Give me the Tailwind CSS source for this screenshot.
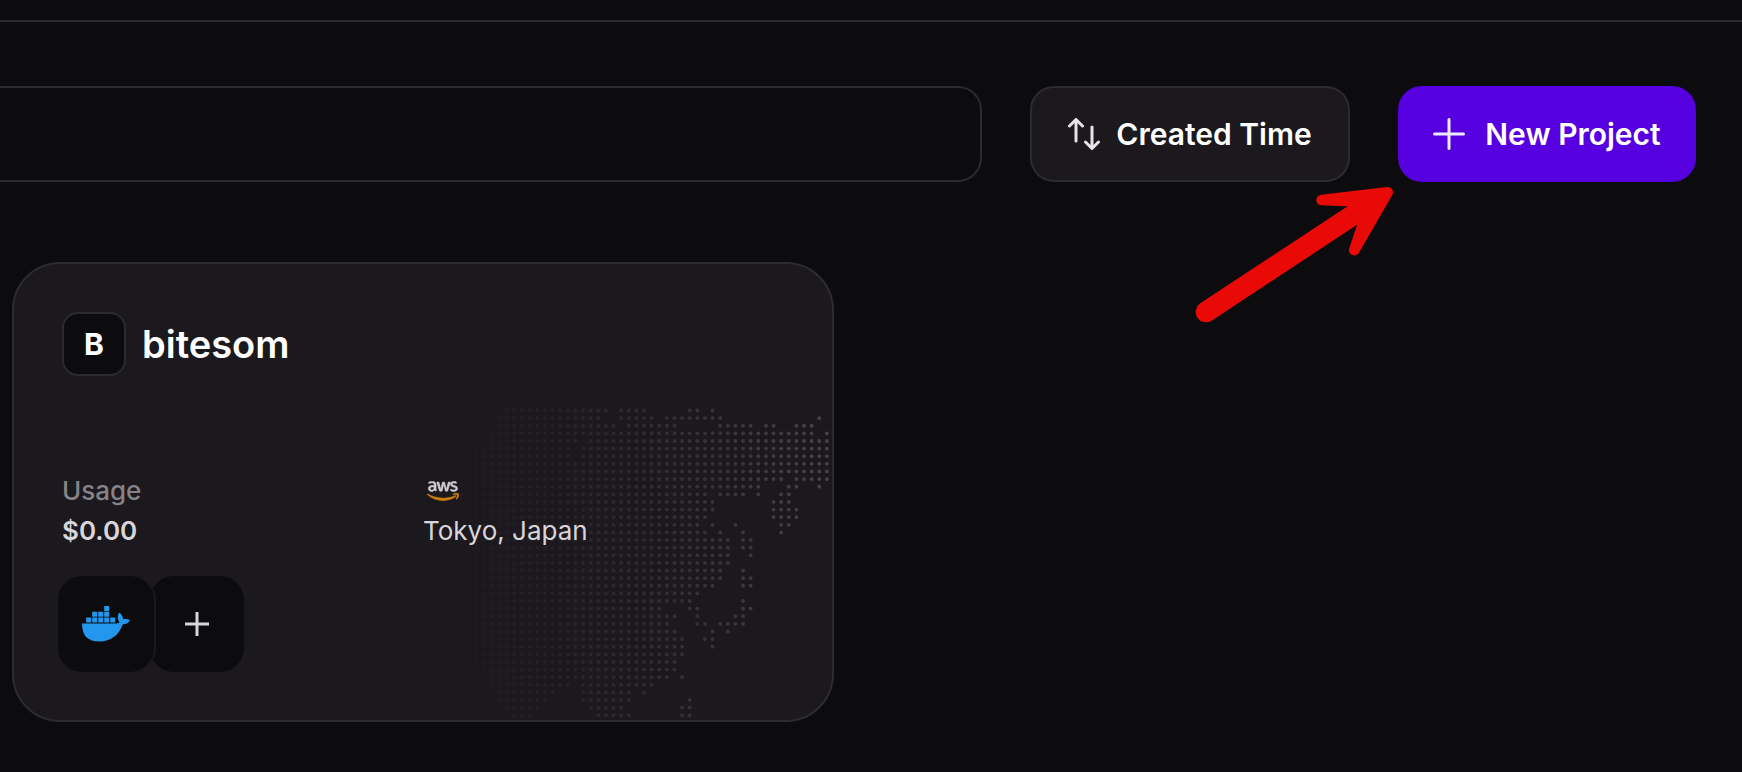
<!DOCTYPE html>
<html lang="en">
<head>
<meta charset="utf-8">
<meta name="viewport" content="width=device-width, initial-scale=1">
<title>Projects</title>
<script src="https://cdn.jsdelivr.net/npm/@tailwindcss/browser@4"></script>
</head>
<body class="min-h-screen overflow-x-hidden bg-[#0c0c0e] font-['Inter','Liberation_Sans',sans-serif] text-white">
  <header class="h-[22px] border-b-2 border-[#2b2b2d]"></header>
  <main class="pr-[46px] pt-16 pl-3">
    <div class="-ml-16 flex items-center gap-12">
      <input type="search" aria-label="Search projects" class="h-24 min-w-0 flex-1 rounded-3xl border-2 border-[#2b2b2d] bg-transparent px-8 text-[30px] outline-none">
      <button type="button" class="flex h-24 w-80 shrink-0 items-center justify-center gap-4 rounded-3xl border-2 border-[#2d2b2f] bg-[#1b191d] text-[30px] font-semibold whitespace-nowrap">
        <svg class="h-8 w-8 shrink-0" viewBox="0 0 32 32" fill="none" stroke="#e6e4e8" stroke-width="3" stroke-linecap="round" stroke-linejoin="round" aria-hidden="true">
          <path d="M8 23V2M1.500 8 8 1.500 14.500 8M24 9v21M17.500 24 24 30.500 30.500 24"/>
        </svg>
        Created Time
      </button>
      <div class="relative shrink-0">
        <button type="button" class="flex h-24 w-[298px] items-center justify-center gap-5 rounded-3xl bg-[#5700df] text-[30px] font-semibold whitespace-nowrap">
          <svg class="h-8 w-8 shrink-0" viewBox="0 0 32 32" stroke="#f0eaff" stroke-width="3" stroke-linecap="round" aria-hidden="true"><path d="M16 1.500v29M1.500 16h29"/></svg>
          New Project
        </button>
        <svg class="pointer-events-none absolute top-[84px] -left-[228px] h-[170px] w-[250px]" viewBox="0 0 750 510" fill="#e90a08" stroke="#e90a08" stroke-linecap="round" stroke-linejoin="round" aria-hidden="true">
          <path stroke-width="62" fill="none" d="M108 426 575 118"/>
          <path stroke-width="32" d="M653 67 455 90 565 94 584 147 553 240Z"/>
        </svg>
      </div>
    </div>

    <div class="mt-20 grid grid-cols-2 gap-10">
      <article class="relative overflow-hidden rounded-[48px] border-2 border-[#2d2b2f] bg-[#1b191d] p-12">
        <svg class="absolute right-0 bottom-0 h-80 w-[400px]" viewBox="-60 0 400 320" aria-hidden="true">
          <defs>
            <linearGradient id="fade" gradientUnits="userSpaceOnUse" x1="-60" x2="340" y1="0" y2="0">
              <stop offset="0" stop-color="#464449" stop-opacity="0"/>
              <stop offset="0.3" stop-color="#464449" stop-opacity="0.2"/>
              <stop offset="0.6" stop-color="#464449" stop-opacity="0.5"/>
              <stop offset="1" stop-color="#464449"/>
            </linearGradient>
          </defs>
          <path id="map" fill="url(#fade)"/>
        </svg>
        <div class="relative">
          <div class="flex items-center gap-4">
            <span class="flex h-16 w-16 items-center justify-center rounded-2xl border-2 border-[#2b2b2d] bg-[#0c0c0e] text-[30px] font-bold">B</span>
            <h2 class="text-[38px] leading-[48px] font-semibold">bitesom</h2>
          </div>
          <div class="mt-[95px] grid grid-cols-2 text-[26px] leading-10">
            <div>
              <p class="font-medium text-[#858387]">Usage</p>
              <p class="font-semibold text-[#d8d6da]">$0.00</p>
            </div>
            <div>
              <div class="flex h-10 items-center">
                <svg class="ml-1 h-5 w-8" viewBox="0 0 304 182" role="img" aria-label="aws">
                  <path fill="#d0ced3" stroke="#d0ced3" stroke-width="6" d="M86 66c0 4 0 7 1 9s2 5 4 8c1 2 0 3-1 4l-8 4c-3 0-6-5-9-10-8 9-17 14-30 14C25 95 13 85 13 68c0-18 14-29 36-29 6 0 12 1 19 3v-8c0-15-7-21-23-21-9 0-18 3-25 6-3 0-4-1-4-4V10c0-2 1-3 4-4 8-4 18-6 29-6 27 0 37 12 37 34zM45 82c12 0 23-7 23-22v-6c-6-1-11-2-16-2-14 0-21 5-21 15 0 9 5 15 14 15zm80 11c-4 0-6-1-7-5L94 11c-1-3 0-5 3-5h10c4 0 6 1 7 5l17 66 15-66c1-4 3-5 7-5h8c4 0 6 1 7 5l16 67 17-67c1-4 3-5 7-5h10c3 0 4 2 3 5l-24 77c-1 4-3 5-7 5h-9c-4 0-6-1-7-5l-15-64-15 64c-1 4-3 5-7 5zm127 2c-10 0-19-2-25-6-3-1-3-3-3-5v-6c0-3 2-4 5-3 8 4 15 6 24 6 13 0 20-5 20-13 0-6-4-10-14-13l-14-4c-14-5-22-14-22-25C223 10 236 0 254 0c8 0 16 1 24 5 2 1 3 2 3 5v5c0 3-2 4-5 3-6-2-12-4-19-4-12 0-18 4-18 11 0 6 4 9 15 13l13 4c16 5 23 13 23 25 0 17-15 28-38 28z"/>
                  <path fill="#d07f0a" stroke="#d07f0a" stroke-width="6" d="M274 144c-33 24-81 37-122 37-58 0-110-21-149-57-3-3 0-7 3-4 43 24 95 39 149 39 37 0 77-8 114-23 6-3 10 3 5 8zm13-16c-4-5-28-3-39-1-3 0-4-2-1-4 19-14 50-10 54-5s-1 36-19 51c-3 2-5 1-4-2 4-10 13-33 9-39z"/>
                </svg>
              </div>
              <p class="text-[#d8d6da]">Tokyo, Japan</p>
            </div>
          </div>
          <div class="mt-[25px] -ml-1 flex">
            <button type="button" aria-label="Docker service" class="z-10 flex h-24 w-24 items-center justify-center rounded-3xl bg-[#0c0c0e] ring-2 ring-[#1b191d]">
              <svg class="h-9 w-12" viewBox="0 0 48 36" fill="#2396ed" aria-hidden="true">
                <path d="M22.200 0h5v5h-5zM10.200 5.800h5v5h-5zM16.200 5.800h5v5h-5zM22.200 5.800h5v5h-5zM4.200 11.600h5v5h-5zM10.200 11.600h5v5h-5zM16.200 11.600h5v5h-5zM22.200 11.600h5v5h-5zM28.200 11.600h5v5h-5z"/>
                <path d="M0 17.500h33c2 0 3.500-.3 4.500-1-2.200-3-2.300-7-.5-10 2.500 1.600 4 4 4.200 6.800 2.300-.5 4.800-.2 6.800 1-1.300 2.800-3.800 4-7.200 4C37 29 29 35.500 17.500 35.500 6 35.500 0 30 0 17.500z"/>
              </svg>
            </button>
            <button type="button" aria-label="Add service" class="-ml-1 flex h-24 w-[94px] items-center justify-center rounded-3xl bg-[#0c0c0e]">
              <svg class="h-6 w-6" viewBox="0 0 24 24" stroke="#d8d6da" stroke-width="3" aria-hidden="true"><path d="M12 0v24M0 12h24"/></svg>
            </button>
          </div>
        </div>
      </article>
    </div>
  </main>
  <script>
    // Dotted map of East Asia: each row lists [first, last] column runs.
    const rows = [
      [[-18,-5],[-3,0],[6,7],[9,9]],
      [[-19,-6],[-3,1],[3,10],[23,23]],
      [[-19,-4],[-2,4],[10,14],[16,17],[20,22]],
      [[-20,22],[24,24]],
      [[-20,-9],[-7,24]],
      [[-22,-10],[-8,24]],
      [[-23,-10],[-8,24]],
      [[-23,24]],
      [[-23,24]],
      [[-23,18],[20,24]],
      [[-24,15],[19,20],[23,23]],
      [[-24,8],[10,13],[15,15],[18,19]],
      [[-24,9],[17,19]],
      [[-24,9],[17,20]],
      [[-24,8],[17,20]],
      [[-23,7],[9,9],[12,12],[18,19]],
      [[-23,8],[10,10],[13,13],[18,18]],
      [[-23,11],[13,14]],
      [[-23,11],[13,14]],
      [[-23,11],[14,14]],
      [[-23,11]],
      [[-23,10],[13,13]],
      [[-24,10],[13,14]],
      [[-24,9],[13,14]],
      [[-25,7]],
      [[-25,6],[13,13]],
      [[-26,2],[6,7],[13,14]],
      [[-26,4],[7,7],[12,13]],
      [[-24,3],[7,8],[10,13]],
      [[-24,4],[9,9],[11,11]],
      [[-23,5],[8,9]],
      [[-23,5],[9,9]],
      [[-22,5]],
      [[-22,4]],
      [[-21,4]],
      [[-20,3],[5,5]],
      [[-20,-10],[-8,1]],
      [[-19,-12],[-8,-2],[0,0]],
      [[-19,-13],[-8,-2],[6,6]],
      [[-18,-14],[-7,-3],[5,6]],
      [[-17,-15],[-6,-2],[5,6]]
    ];
    const step = 7.62, r = 1.9;
    let d = "";
    rows.forEach((runs, y) => {
      for (const [a, b] of runs)
        for (let x = a; x <= b; x++)
          d += `M${152 + x * step - r} ${10.5 + y * step}a${r} ${r} 0 1 1 ${2 * r} 0a${r} ${r} 0 1 1 ${-2 * r} 0`;
    });
    document.getElementById("map").setAttribute("d", d);
  </script>
</body>
</html>
